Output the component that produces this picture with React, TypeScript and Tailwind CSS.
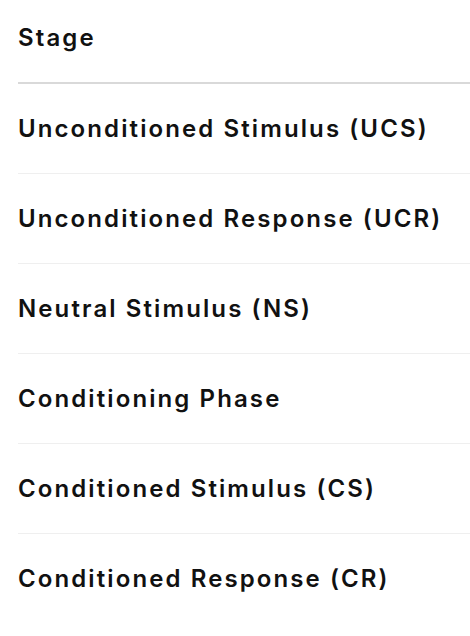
const rows: string[] = [
    "Unconditioned Stimulus (UCS)",
    "Unconditioned Response (UCR)",
    "Neutral Stimulus (NS)",
    "Conditioning Phase",
    "Conditioned Stimulus (CS)",
    "Conditioned Response (CR)",
];

const App = () => {
    return (
        <div className="min-h-screen bg-white pl-[18px] font-['Inter',sans-serif] text-[#111111]">
            <div className="flex h-[84px] items-start border-b-2 border-[#d9d9d9] pt-[22px] text-[24px] font-semibold leading-[32px] tracking-[2.1px]">
                Stage
            </div>
            {rows.map((row, i) => (
                <div
                    key={row}
                    className={`flex h-[90px] items-center text-[24px] font-semibold leading-[32px] tracking-[2.1px] ${i < rows.length - 1 ? "border-b border-[#efefef]" : ""}`}
                >
                    {row}
                </div>
            ))}
        </div>
    );
};

export default App;
